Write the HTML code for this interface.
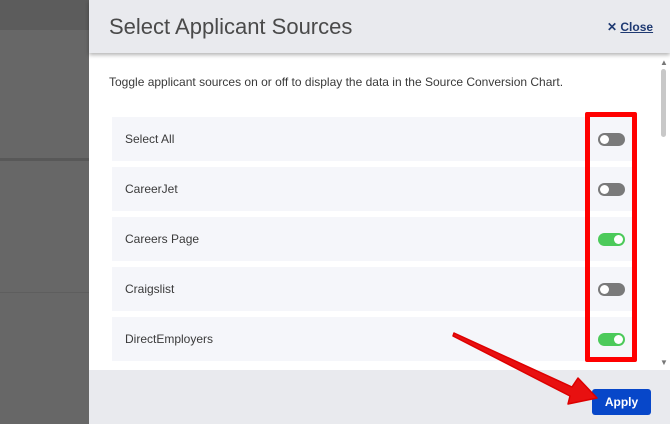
<!DOCTYPE html><html><head><style>
body{margin:0;width:670px;height:424px;overflow:hidden;position:relative;font-family:"Liberation Sans",sans-serif;background:#676767}
.a{position:absolute}
.row{position:absolute;left:112px;width:525px;height:44px;background:#f5f6fa;font-size:12px;color:#3a3a3a}
.row span{position:absolute;left:13px;top:15px}
.tg{position:absolute;left:598px;width:27px;height:13px;border-radius:7px;background:#7a7a7a}
.tg i{position:absolute;top:2px;left:2px;width:9px;height:9px;border-radius:50%;background:#fff}
.on{background:#4cca5a}.on i{left:16px}
</style></head><body>
<div class="a" style="left:0;top:0;width:89px;height:30px;background:#5c5c5c"></div>
<div class="a" style="left:0;top:158px;width:89px;height:3px;background:#585858"></div>
<div class="a" style="left:0;top:292px;width:89px;height:1px;background:#5e5e5e"></div>
<div class="a" style="left:89px;top:0;width:581px;height:424px;background:#fff"></div>
<div class="a" style="left:89px;top:0;width:581px;height:53px;background:#e9eaee;box-shadow:0 2px 4px rgba(0,0,0,.3)"></div>
<div class="a" style="left:109px;top:14px;font-size:22px;color:#4a4a4a">Select Applicant Sources</div>
<div class="a" style="left:607px;top:20px;font-size:12px;color:#1f3a72;font-weight:bold">✕ <u>Close</u></div>
<div class="a" style="left:109px;top:75px;font-size:12px;color:#3a3a3a">Toggle applicant sources on or off to display the data in the Source Conversion Chart.</div>
<div class="row" style="top:117px"><span>Select All</span></div>
<div class="row" style="top:167px"><span>CareerJet</span></div>
<div class="row" style="top:217px"><span>Careers Page</span></div>
<div class="row" style="top:267px"><span>Craigslist</span></div>
<div class="row" style="top:317px"><span>DirectEmployers</span></div>
<div class="tg" style="top:133px"><i></i></div>
<div class="tg" style="top:183px"><i></i></div>
<div class="tg on" style="top:233px"><i></i></div>
<div class="tg" style="top:283px"><i></i></div>
<div class="tg on" style="top:333px"><i></i></div>
<div class="a" style="left:585px;top:112px;width:42px;height:240px;border:5px solid #f00;border-radius:2px"></div>
<div class="a" style="left:661px;top:69px;width:5px;height:68px;background:#c8c8c8;border-radius:3px"></div>
<div class="a" style="left:660px;top:58px;font-size:8px;color:#777">▲</div>
<div class="a" style="left:660px;top:358px;font-size:8px;color:#777">▼</div>
<div class="a" style="left:89px;top:370px;width:581px;height:54px;background:#e9eaee"></div>
<div class="a" style="left:592px;top:389px;width:59px;height:26px;background:#0747c9;border-radius:3px;color:#fff;font-weight:bold;font-size:12px;text-align:center;line-height:26px">Apply</div>
<svg class="a" style="left:0;top:0" width="670" height="424"><path d="M454 333 L572 387 L578 378 L597 398 L568 404 L570 396 L453 336 Z" fill="#e81010" stroke="#d00" stroke-width="1.5" stroke-linejoin="round"/></svg>
</body></html>
